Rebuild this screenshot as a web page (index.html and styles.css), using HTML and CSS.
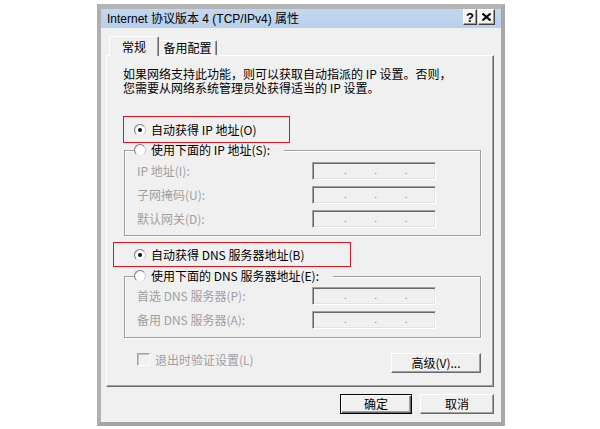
FILE: index.html
```html
<!DOCTYPE html>
<html lang="zh-CN">
<head>
<meta charset="utf-8">
<title>Internet 协议版本 4 (TCP/IPv4) 属性</title>
<link rel="stylesheet" href="styles.css">
</head>
<body>
<div class="window">
  <div class="titlebar">
    <span class="title">Internet 协议版本 4 (TCP/IPv4) 属性</span>
    <div class="tbtns">
      <span class="tbtn help">?</span>
      <span class="tbtn close"><svg width="9" height="8" viewBox="0 0 9 8"><path d="M0.5 0.5 L8.5 7.5 M8.5 0.5 L0.5 7.5" stroke="#000" stroke-width="2"/></svg></span>
    </div>
  </div>
  <div class="client">
    <div class="tabs">
      <div class="tab active">常规</div>
      <div class="tab">备用配置</div>
    </div>
    <div class="panel">
      <p class="desc">如果网络支持此功能，则可以获取自动指派的 IP 设置。否则，<br>您需要从网络系统管理员处获得适当的 IP 设置。</p>

      <div class="mark mark-ip"><span class="radio checked"></span><span>自动获得 IP 地址(O)</span></div>

      <div class="group group-ip">
        <div class="legend"><span class="radio"></span><span>使用下面的 IP 地址(S):</span></div>
        <div class="row first"><span class="lbl">IP 地址(I):</span><span class="ipbox"><span class="dot">.</span><span class="dot">.</span><span class="dot">.</span></span></div>
        <div class="row"><span class="lbl">子网掩码(U):</span><span class="ipbox"><span class="dot">.</span><span class="dot">.</span><span class="dot">.</span></span></div>
        <div class="row"><span class="lbl">默认网关(D):</span><span class="ipbox"><span class="dot">.</span><span class="dot">.</span><span class="dot">.</span></span></div>
      </div>

      <div class="mark mark-dns"><span class="radio checked"></span><span>自动获得 DNS 服务器地址(B)</span></div>

      <div class="group group-dns">
        <div class="legend"><span class="radio"></span><span>使用下面的 DNS 服务器地址(E):</span></div>
        <div class="row first"><span class="lbl">首选 DNS 服务器(P):</span><span class="ipbox"><span class="dot">.</span><span class="dot">.</span><span class="dot">.</span></span></div>
        <div class="row"><span class="lbl">备用 DNS 服务器(A):</span><span class="ipbox"><span class="dot">.</span><span class="dot">.</span><span class="dot">.</span></span></div>
      </div>

      <div class="options">
        <div class="chk"><span class="box"></span><span>退出时验证设置(L)</span></div>
        <button class="btn adv">高级(V)...</button>
      </div>
    </div>
    <div class="actions">
      <button class="btn ok">确定</button>
      <button class="btn cancel">取消</button>
    </div>
  </div>
</div>
</body>
</html>
```
FILE: styles.css
```css
html, body {
  margin: 0;
  padding: 0;
  background: #fff;
}
body {
  font-family: "Noto Sans CJK SC", "Noto Sans", sans-serif;
  font-size: 12px;
  color: #000;
}
.window {
  margin: 4px 0 0 97px;
  width: 400px;
  height: 413px;
  border: 4px solid #ababab;
  border-top-width: 5px;
  border-color: #b4b4b4 #a8a8a8 #a4a4a4 #b0b0b0;
}
.titlebar {
  height: 19px;
  background: linear-gradient(#c2d8f0, #b8d0ea);
  display: flex;
  align-items: center;
  justify-content: space-between;
  padding: 0 6px;
}
.title {
  font-family: "Liberation Sans", "Noto Sans CJK SC", sans-serif;
  font-size: 12px;
  line-height: 14px;
  color: #000;
}
.tbtns {
  display: flex;
  align-self: flex-start;
  gap: 1px;
}
.tbtn {
  height: 16px;
  box-sizing: border-box;
  background: #f4f4f4;
  border: 1px solid;
  border-color: #fff #404040 #404040 #fff;
  box-shadow: inset -1px -1px #9a9a9a;
  display: flex;
  align-items: center;
  justify-content: center;
  font-family: "Liberation Sans", sans-serif;
  font-weight: bold;
  font-size: 13px;
  line-height: 1;
}
.tbtn.help { width: 14px; }
.tbtn.close { width: 17px; }
.client {
  height: 394px;
  background: #f0f0f0;
  box-sizing: border-box;
  padding: 8px 7px 0 5px;
}
.tabs {
  display: flex;
  align-items: flex-end;
  height: 20px;
  margin: 0 0 -1px 3px;
  position: relative;
  z-index: 1;
}
.tab {
  box-sizing: border-box;
  background: #f0f0f0;
  border: 1px solid;
  border-bottom: none;
  border-color: #fff #696969 transparent #fff;
  box-shadow: inset -1px 0 #a0a0a0;
  border-radius: 2px 2px 0 0;
  display: flex;
  justify-content: center;
  line-height: 14px;
}
.tab.active {
  width: 50px;
  height: 20px;
  padding-top: 3px;
}
.tab:not(.active) {
  width: 58px;
  height: 15px;
  margin-bottom: 1px;
  padding-top: 0;
  border-left: none;
}
.panel {
  width: 388px;
  height: 332px;
  box-sizing: border-box;
  border: 1px solid;
  border-color: #fff #696969 #696969 #fff;
  box-shadow: inset -1px -1px #a0a0a0;
  overflow: hidden;
}
.desc {
  margin: 11px 0 0 16px;
  line-height: 14px;
  white-space: nowrap;
}
.radio {
  flex: none;
  width: 12px;
  height: 12px;
  box-sizing: border-box;
  border-radius: 50%;
  border: 1px solid;
  border-color: #7c7c7c #c8c8c8 #e8e8e8 #7c7c7c;
  background: radial-gradient(circle at 60% 60%, #fff 45%, #e4e4e4 100%);
  display: flex;
  align-items: center;
  justify-content: center;
}
.radio.checked::after {
  content: "";
  width: 4px;
  height: 4px;
  border-radius: 50%;
  background: #111;
}
.mark {
  border: 1px solid #e5141c;
  box-sizing: border-box;
  display: flex;
  align-items: center;
  gap: 5px;
  line-height: 14px;
  white-space: nowrap;
}
.mark-ip {
  margin: 21px 0 0 16px;
  width: 167px;
  height: 27px;
  padding: 1px 0 0 10px;
}
.mark-dns {
  margin: 6px 0 0 6px;
  width: 238px;
  height: 25px;
  padding: 1px 0 0 20px;
}
.group {
  margin-left: 17px;
  width: 357px;
  box-sizing: border-box;
  border: 1px solid #a0a0a0;
  box-shadow: inset 1px 1px #fff, 1px 1px #fff;
}
.group-ip {
  margin-top: 7px;
  padding-bottom: 7px;
}
.group-dns {
  margin-top: 9px;
  padding-bottom: 8px;
}
.legend {
  display: flex;
  align-items: center;
  gap: 5px;
  width: fit-content;
  height: 14px;
  line-height: 14px;
  margin: -8px 0 0 9px;
  padding-right: 14px;
  background: #f0f0f0;
  white-space: nowrap;
}
.row {
  display: flex;
  align-items: center;
  height: 18px;
  padding-left: 12px;
  margin-top: 6px;
}
.group-ip .row.first { margin-top: 5px; }
.group-dns .row.first { margin-top: 4px; }
.lbl {
  width: 175px;
  color: #a0a0a0;
  line-height: 14px;
  white-space: nowrap;
}
.ipbox {
  width: 124px;
  height: 18px;
  box-sizing: border-box;
  border: 1px solid;
  border-color: #a0a0a0 #fff #fff #a0a0a0;
  box-shadow: inset 1px 1px #696969, inset -1px -1px #e3e3e3;
  display: flex;
  padding-left: 31px;
  color: #8a8a8a;
  font-size: 10px;
  line-height: 14px;
}
.dot {
  width: 31px;
}
.options {
  display: flex;
  justify-content: space-between;
  align-items: flex-start;
  margin: 15px 0 0 30px;
  width: 344px;
}
.chk {
  display: flex;
  align-items: center;
  gap: 5px;
  color: #a0a0a0;
  height: 13px;
  line-height: 14px;
}
.box {
  width: 13px;
  height: 13px;
  box-sizing: border-box;
  border: 1px solid;
  border-color: #a0a0a0 #fff #fff #a0a0a0;
  box-shadow: inset 1px 1px #c4c4c4;
  background: #f0f0f0;
}
.btn {
  font-family: "Noto Sans CJK SC", sans-serif;
  font-size: 12px;
  line-height: 14px;
  height: 20px;
  padding: 0;
  margin: 0;
  box-sizing: border-box;
  background: #f0f0f0;
  color: #000;
  border: 1px solid;
  border-color: #fff #696969 #696969 #fff;
  box-shadow: inset -1px -1px #a0a0a0;
}
.btn.adv { width: 90px; }
.actions {
  display: flex;
  justify-content: flex-end;
  gap: 8px;
  margin-top: 7px;
}
.btn.ok {
  width: 72px;
  border-color: #000;
  box-shadow: inset 1px 1px #fff, inset -1px -1px #696969, inset -2px -2px #a0a0a0;
}
.btn.cancel { width: 74px; }
```
